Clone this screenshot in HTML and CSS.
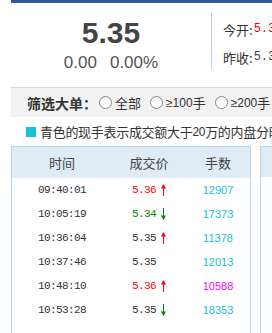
FILE: index.html
```html
<!DOCTYPE html>
<html lang="zh-CN">
<head>
  <meta charset="UTF-8">
  <title>分时成交</title>
  <link rel="stylesheet" href="styles.css">
</head>
<body>
  <div class="page">
    <div class="topbar"></div>

    <div class="quote">
      <div class="price-box">
        <div class="price">5.35</div>
        <div class="change"><span>0.00</span><span>0.00%</span></div>
      </div>
      <div class="divider"></div>
      <div class="info">
        <div class="info-row">今开:<span class="num up">5.36</span></div>
        <div class="info-row">昨收:<span class="num">5.35</span></div>
      </div>
    </div>

    <div class="filter">
      <span class="filter-title">筛选大单：</span>
      <label class="opt"><i class="radio"></i>全部</label>
      <label class="opt"><i class="radio"></i><span class="ge">≥100</span>手</label>
      <label class="opt"><i class="radio"></i><span class="ge">≥200</span>手</label>
    </div>

    <div class="legend">
      <i class="legend-mark"></i>青色的现手表示成交额大于<span class="digits">20</span>万的内盘分时成交
    </div>

    <div class="panels">
      <div class="table">
        <div class="thead">
          <div>时间</div>
          <div>成交价</div>
          <div>手数</div>
        </div>
        <div class="tr">
          <div class="time">09:40:01</div>
          <div class="px up">5.36<svg class="arrow" viewBox="0 0 5 12" width="5" height="12"><path d="M2.5 3V12" stroke="currentColor"/><path d="M0 4.5L2.5 0L5 4.5Z" fill="currentColor"/></svg></div>
          <div class="vol big">12907</div>
        </div>
        <div class="tr">
          <div class="time">10:05:19</div>
          <div class="px down">5.34<svg class="arrow" viewBox="0 0 5 12" width="5" height="12"><path d="M2.5 0V9" stroke="currentColor"/><path d="M0 7.5L2.5 12L5 7.5Z" fill="currentColor"/></svg></div>
          <div class="vol big">17373</div>
        </div>
        <div class="tr">
          <div class="time">10:36:04</div>
          <div class="px">5.35<svg class="arrow up" viewBox="0 0 5 12" width="5" height="12"><path d="M2.5 3V12" stroke="currentColor"/><path d="M0 4.5L2.5 0L5 4.5Z" fill="currentColor"/></svg></div>
          <div class="vol big">11378</div>
        </div>
        <div class="tr">
          <div class="time">10:37:46</div>
          <div class="px">5.35</div>
          <div class="vol big">12013</div>
        </div>
        <div class="tr">
          <div class="time">10:48:10</div>
          <div class="px up">5.36<svg class="arrow" viewBox="0 0 5 12" width="5" height="12"><path d="M2.5 3V12" stroke="currentColor"/><path d="M0 4.5L2.5 0L5 4.5Z" fill="currentColor"/></svg></div>
          <div class="vol huge">10588</div>
        </div>
        <div class="tr">
          <div class="time">10:53:28</div>
          <div class="px">5.35<svg class="arrow down" viewBox="0 0 5 12" width="5" height="12"><path d="M2.5 0V9" stroke="currentColor"/><path d="M0 7.5L2.5 12L5 7.5Z" fill="currentColor"/></svg></div>
          <div class="vol big">18353</div>
        </div>
      </div>
      <div class="table side"></div>
    </div>
  </div>
</body>
</html>
```

FILE: styles.css
```css
html, body {
  margin: 0;
  padding: 0;
  overflow: hidden;
  background: #fff;
}

body {
  font-family: "Noto Sans CJK SC", "Liberation Sans", sans-serif;
  color: #333;
}

.page {
  width: 400px;
  height: 333px;
  padding-left: 11px;
  overflow: hidden;
}

.topbar {
  height: 3px;
  background: #2f5a96;
}

/* 行情头部 */
.quote {
  display: flex;
  height: 84px;
}

.price-box {
  width: 200px;
  padding-top: 15px;
  text-align: center;
  font-family: "Liberation Sans", sans-serif;
}

.price {
  font-size: 30px;
  line-height: 30px;
  font-weight: bold;
  color: #444;
}

.change {
  margin-top: 5px;
  font-size: 17px;
  line-height: 20px;
  color: #555;
}

.change span + span {
  margin-left: 13px;
}

.divider {
  width: 0;
  height: 57px;
  margin-top: 10px;
  border-left: 1px solid #ccc;
}

.info {
  padding-left: 11px;
  padding-top: 16px;
}

.info-row {
  display: flex;
  align-items: center;
  font-size: 13px;
  height: 20px;
  margin-bottom: 8px;
  white-space: nowrap;
}

.num {
  font-family: "Liberation Mono", monospace;
  font-size: 12px;
  margin-left: 1px;
  color: #444;
}

.num.up { color: #f00; }

/* 筛选 */
.filter {
  display: flex;
  align-items: center;
  height: 29px;
  padding-left: 16px;
  background: #f2f2f2;
  border-top: 1px solid #c8dcee;
  white-space: nowrap;
  font-size: 13px;
}

.filter-title {
  font-size: 14px;
  font-weight: bold;
  color: #333;
  margin-right: 2px;
}

.opt {
  display: flex;
  align-items: center;
  margin-right: 9px;
}

.radio {
  width: 11px;
  height: 11px;
  border: 1px solid #8a8a8a;
  border-radius: 50%;
  background: linear-gradient(#f4f4f4, #fff);
  margin-right: 3px;
}

.ge {
  font-family: "Liberation Sans", sans-serif;
  font-size: 12px;
}

/* 说明 */
.legend {
  display: flex;
  align-items: center;
  height: 29px;
  padding-left: 15px;
  font-size: 13px;
  letter-spacing: -0.3px;
  color: #333;
  white-space: nowrap;
}

.legend .digits {
  font-family: "Liberation Sans", sans-serif;
  font-size: 12px;
}

.legend-mark {
  width: 10px;
  height: 10px;
  background: #17c0dd;
  margin-right: 4px;
}

/* 成交明细 */
.panels {
  display: flex;
  gap: 9px;
}

.table {
  width: 238px;
  height: 200px;
  border: 1px solid #bcd4e8;
  flex-shrink: 0;
}

.table.side {
  width: 200px;
  border-right: none;
  background: linear-gradient(#dfebf5 0 30px, #fff 30px);
}

.thead,
.tr {
  display: grid;
  grid-template-columns: 100px 74px 64px;
  align-items: center;
}

.thead {
  height: 31px;
  background: #dfebf5;
  font-size: 13px;
  color: #444;
  text-align: center;
}

.tr {
  height: 24px;
}

.time {
  text-align: center;
  font-family: "Liberation Mono", monospace;
  font-size: 11px;
  letter-spacing: -0.6px;
  color: #333;
}

.px {
  display: flex;
  align-items: center;
  padding-left: 20px;
  font-family: "Liberation Mono", monospace;
  font-size: 11px;
  letter-spacing: -0.6px;
  color: #333;
}

.px.up,
.arrow.up { color: #f00; }

.px.down,
.arrow.down { color: #008a00; }

.arrow {
  margin-left: 5px;
}

.vol {
  text-align: center;
  font-family: "Liberation Sans", sans-serif;
  font-size: 11px;
}

.vol.big { color: #17c0dd; }
.vol.huge { color: #f0f; }
```
